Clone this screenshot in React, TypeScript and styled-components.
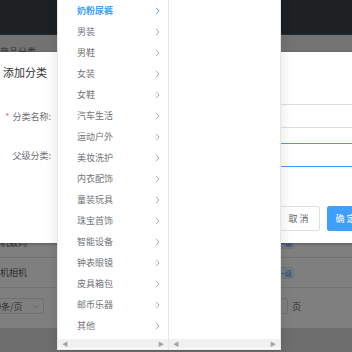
import styled, { createGlobalStyle } from 'styled-components';

const GlobalStyle = createGlobalStyle`
  html, body {
    margin: 0;
    padding: 0;
    width: 352px;
    height: 352px;
    overflow: hidden;
    font-family: "Noto Sans CJK SC", "Liberation Sans", sans-serif;
  }
  * { box-sizing: border-box; }
`;

const categories = [
  '奶粉尿裤', '男装', '男鞋', '女装', '女鞋', '汽车生活', '运动户外', '美妆洗护',
  '内衣配饰', '童装玩具', '珠宝首饰', '智能设备', '钟表眼镜', '皮具箱包', '邮币乐器', '其他',
];

const Page = styled.div`
  position: relative;
  width: 352px;
  height: 352px;
  background: #dcdcdc;
  overflow: hidden;
`;

const Header = styled.div`
  height: 35px;
  background: #3d4349;
  border-bottom: 1px solid #50565c;
`;

const TabBar = styled.div`
  height: 17px;
  background: #e6e6e6;
  padding: 11px 0 0 0;
  font-size: 9px;
  line-height: 12px;
  color: #606266;
`;

const Card = styled.div`
  background: #fff;
  padding-top: 176px;
  padding-bottom: 14px;
`;

const TableRow = styled.div`
  display: grid;
  grid-template-columns: 276px auto;
  align-items: center;
  height: 30px;
  border-bottom: 1px solid #e4e4e4;
  font-size: 9px;
  color: #606266;
`;

const NameCell = styled.span`
  margin-left: -9px;
`;

const Tag = styled.span`
  display: inline-flex;
  align-items: center;
  justify-content: center;
  width: 18px;
  height: 12px;
  font-size: 7px;
  color: #409eff;
  background: #ecf5ff;
  border: 1px solid #d9ecff;
  border-radius: 2px;
`;

const Pager = styled.div`
  display: flex;
  align-items: center;
  margin-top: 10px;
  height: 16px;
  font-size: 9px;
  color: #606266;
`;

const SizeSelect = styled.div`
  display: flex;
  align-items: center;
  justify-content: space-between;
  margin-left: -20px;
  width: 64px;
  height: 16px;
  padding: 0 4px 0 10px;
  border: 1px solid #dcdfe6;
  border-radius: 2px;
`;

const JumpInput = styled.div`
  margin-left: auto;
  width: 30px;
  height: 16px;
  border: 1px solid #dcdfe6;
  border-radius: 2px;
`;

const PageWord = styled.span`
  margin: 0 51px 0 4px;
`;

const Mask = styled.div`
  position: absolute;
  inset: 0;
  background: rgba(0, 0, 0, 0.5);
`;

const Dialog = styled.div`
  position: absolute;
  top: 52px;
  left: -10px;
  width: 389px;
  height: 191px;
  background: #fff;
  box-shadow: 0 1px 3px rgba(0, 0, 0, 0.3);
`;

const DialogHeader = styled.div`
  padding: 12px 13px 0;
  font-size: 11px;
  line-height: 16px;
  color: #303133;
`;

const Form = styled.div`
  padding: 24px 13px 0;
  display: flex;
  flex-direction: column;
  gap: 15px;
`;

const FormRow = styled.div`
  display: flex;
  align-items: center;
  height: 24px;
`;

const Label = styled.label`
  width: 55px;
  padding-right: 7px;
  text-align: right;
  font-size: 9px;
  color: #6b6d71;
  white-space: nowrap;
`;

const Star = styled.span`
  color: #f56c6c;
  margin-right: 3px;
`;

const Input = styled.div<{ $focused?: boolean }>`
  flex: 1;
  height: 24px;
  border: 1px solid ${p => (p.$focused ? '#409eff' : '#dcdfe6')};
  border-radius: 2px;
  background: #fff;
`;

const Footer = styled.div`
  display: flex;
  justify-content: flex-end;
  gap: 7px;
  padding: 39px 13px 0;
`;

const Button = styled.button<{ $primary?: boolean }>`
  height: 25px;
  width: ${p => (p.$primary ? 39 : 41)}px;
  padding: 0;
  font-family: inherit;
  font-size: 9px;
  letter-spacing: 2px;
  border-radius: 2px;
  border: 1px solid ${p => (p.$primary ? '#409eff' : '#dcdfe6')};
  background: ${p => (p.$primary ? '#409eff' : '#fff')};
  color: ${p => (p.$primary ? '#fff' : '#606266')};
`;

const Popper = styled.div`
  position: absolute;
  left: 57px;
  top: -4px;
  width: 224px;
  height: 354px;
  display: flex;
  background: #fff;
  border: 1px solid #e4e7ed;
  box-shadow: 0 2px 12px rgba(0, 0, 0, 0.12);
`;

const Menu = styled.div<{ $divider?: boolean }>`
  width: 111px;
  display: flex;
  flex-direction: column;
  border-right: ${p => (p.$divider ? '1px solid #e4e7ed' : 'none')};
`;

const List = styled.ul`
  flex: 1;
  margin: 0;
  padding: 3px 0 0;
  list-style: none;
`;

const Node = styled.li<{ $active?: boolean }>`
  display: flex;
  align-items: center;
  justify-content: space-between;
  height: 21px;
  padding: 0 8px 0 19px;
  font-size: 9px;
  color: ${p => (p.$active ? '#409eff' : '#707276')};
  font-weight: ${p => (p.$active ? 700 : 400)};
`;

const HScroll = styled.div`
  display: flex;
  align-items: center;
  justify-content: space-between;
  height: 9px;
  margin-bottom: 1px;
  padding: 0 4px;
  background: #f1f1f1;
  font-size: 6px;
  color: #a3a3a3;
`;

const Arrow = ({ color }: { color: string }) => (
  <svg width="5" height="8" viewBox="0 0 5 8">
    <polyline points="1,0.8 4,4 1,7.2" fill="none" stroke={color} strokeWidth="0.9" />
  </svg>
);

const ChevronDown = () => (
  <svg width="7" height="5" viewBox="0 0 7 5">
    <polyline points="0.8,1 3.5,3.8 6.2,1" fill="none" stroke="#c0c4cc" strokeWidth="0.9" />
  </svg>
);

export default function App() {
  return (
    <>
      <GlobalStyle />
      <Page>
        <Header />
        <TabBar>商品分类</TabBar>
        <Card>
          <TableRow>
            <NameCell>手机数码</NameCell>
            <Tag>一级</Tag>
          </TableRow>
          <TableRow>
            <NameCell>手机相机</NameCell>
            <Tag>一级</Tag>
          </TableRow>
          <Pager>
            <SizeSelect>
              <span>10条/页</span>
              <ChevronDown />
            </SizeSelect>
            <JumpInput />
            <PageWord>页</PageWord>
          </Pager>
        </Card>
        <Mask />
        <Dialog>
          <DialogHeader>添加分类</DialogHeader>
          <Form>
            <FormRow>
              <Label><Star>*</Star>分类名称:</Label>
              <Input />
            </FormRow>
            <FormRow>
              <Label>父级分类:</Label>
              <Input $focused />
            </FormRow>
          </Form>
          <Footer>
            <Button>取消</Button>
            <Button $primary>确定</Button>
          </Footer>
        </Dialog>
        <Popper>
          <Menu $divider>
            <List>
              {categories.map((c, i) => (
                <Node key={c} $active={i === 0}>
                  <span>{c}</span>
                  <Arrow color={i === 0 ? '#409eff' : '#a0a3a8'} />
                </Node>
              ))}
            </List>
            <HScroll><span>◀</span><span>▶</span></HScroll>
          </Menu>
          <Menu>
            <List />
            <HScroll><span>◀</span><span>▶</span></HScroll>
          </Menu>
        </Popper>
      </Page>
    </>
  );
}
